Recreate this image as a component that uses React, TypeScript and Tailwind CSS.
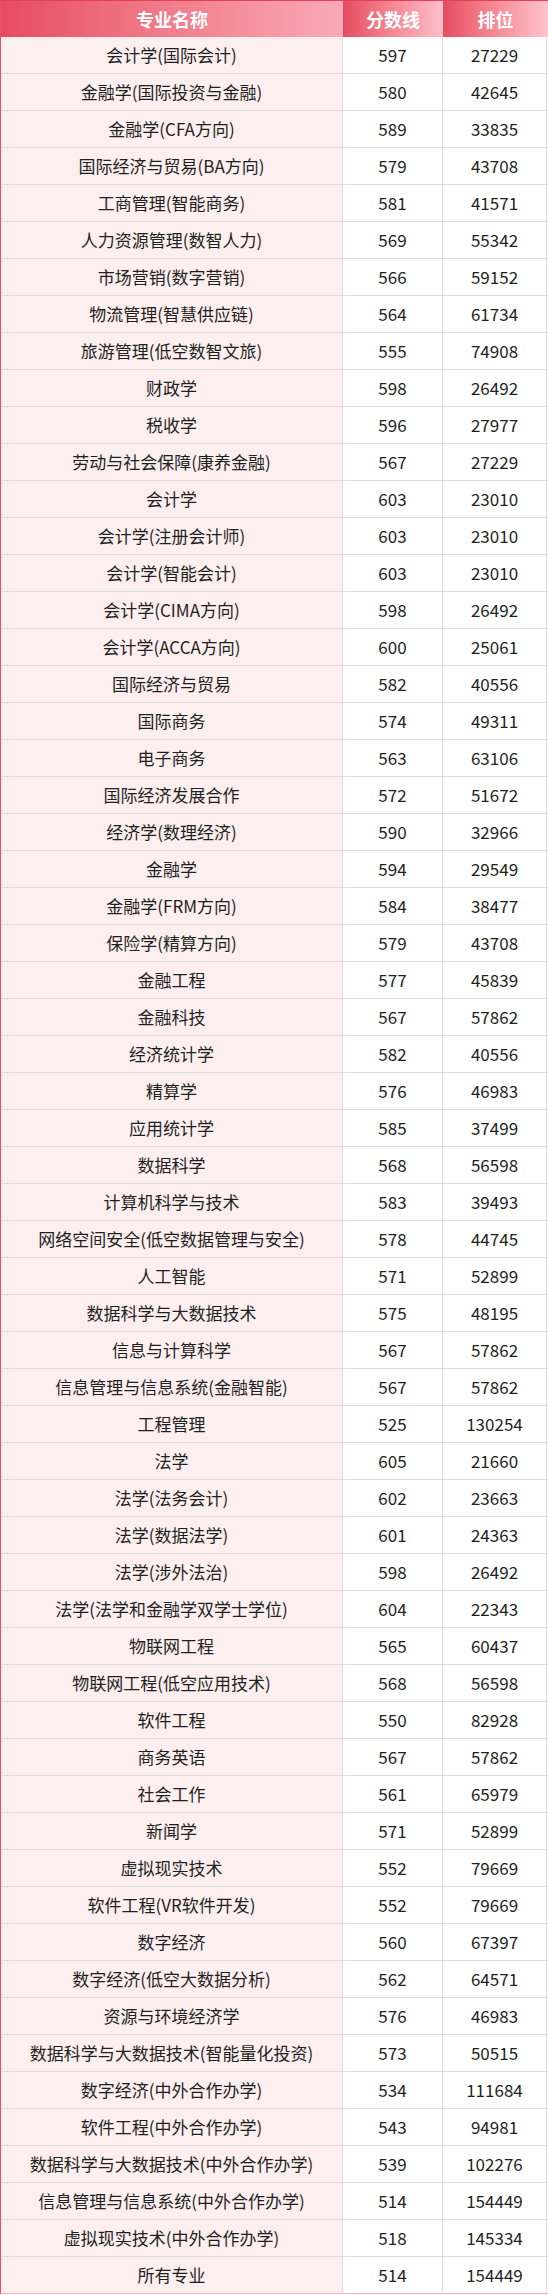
const rows: [string, string, string][] = [
  ["会计学(国际会计)", "597", "27229"],
  ["金融学(国际投资与金融)", "580", "42645"],
  ["金融学(CFA方向)", "589", "33835"],
  ["国际经济与贸易(BA方向)", "579", "43708"],
  ["工商管理(智能商务)", "581", "41571"],
  ["人力资源管理(数智人力)", "569", "55342"],
  ["市场营销(数字营销)", "566", "59152"],
  ["物流管理(智慧供应链)", "564", "61734"],
  ["旅游管理(低空数智文旅)", "555", "74908"],
  ["财政学", "598", "26492"],
  ["税收学", "596", "27977"],
  ["劳动与社会保障(康养金融)", "567", "27229"],
  ["会计学", "603", "23010"],
  ["会计学(注册会计师)", "603", "23010"],
  ["会计学(智能会计)", "603", "23010"],
  ["会计学(CIMA方向)", "598", "26492"],
  ["会计学(ACCA方向)", "600", "25061"],
  ["国际经济与贸易", "582", "40556"],
  ["国际商务", "574", "49311"],
  ["电子商务", "563", "63106"],
  ["国际经济发展合作", "572", "51672"],
  ["经济学(数理经济)", "590", "32966"],
  ["金融学", "594", "29549"],
  ["金融学(FRM方向)", "584", "38477"],
  ["保险学(精算方向)", "579", "43708"],
  ["金融工程", "577", "45839"],
  ["金融科技", "567", "57862"],
  ["经济统计学", "582", "40556"],
  ["精算学", "576", "46983"],
  ["应用统计学", "585", "37499"],
  ["数据科学", "568", "56598"],
  ["计算机科学与技术", "583", "39493"],
  ["网络空间安全(低空数据管理与安全)", "578", "44745"],
  ["人工智能", "571", "52899"],
  ["数据科学与大数据技术", "575", "48195"],
  ["信息与计算科学", "567", "57862"],
  ["信息管理与信息系统(金融智能)", "567", "57862"],
  ["工程管理", "525", "130254"],
  ["法学", "605", "21660"],
  ["法学(法务会计)", "602", "23663"],
  ["法学(数据法学)", "601", "24363"],
  ["法学(涉外法治)", "598", "26492"],
  ["法学(法学和金融学双学士学位)", "604", "22343"],
  ["物联网工程", "565", "60437"],
  ["物联网工程(低空应用技术)", "568", "56598"],
  ["软件工程", "550", "82928"],
  ["商务英语", "567", "57862"],
  ["社会工作", "561", "65979"],
  ["新闻学", "571", "52899"],
  ["虚拟现实技术", "552", "79669"],
  ["软件工程(VR软件开发)", "552", "79669"],
  ["数字经济", "560", "67397"],
  ["数字经济(低空大数据分析)", "562", "64571"],
  ["资源与环境经济学", "576", "46983"],
  ["数据科学与大数据技术(智能量化投资)", "573", "50515"],
  ["数字经济(中外合作办学)", "534", "111684"],
  ["软件工程(中外合作办学)", "543", "94981"],
  ["数据科学与大数据技术(中外合作办学)", "539", "102276"],
  ["信息管理与信息系统(中外合作办学)", "514", "154449"],
  ["虚拟现实技术(中外合作办学)", "518", "145334"],
  ["所有专业", "514", "154449"],
];

export default function App() {
  return (
    <div
      className="w-[548px] bg-white text-[17px] text-[#1f1f1f]"
      style={{ fontFamily: '"Noto Sans CJK SC", "Noto Sans", sans-serif' }}
    >
      <div className="border-l border-[#e8506a]">
        {/* header */}
        <div className="grid h-[37px] grid-cols-[342px_100px_1fr] border-t border-[#e0405a] text-[18px] font-bold text-white">
          <div className="flex items-center justify-center bg-linear-to-r from-[#e54b61] to-[#f9aab7]">专业名称</div>
          <div className="flex items-center justify-center bg-linear-to-r from-[#e54a60] to-[#fdbfca]">分数线</div>
          <div className="flex items-center justify-center bg-linear-to-r from-[#e54a60] to-[#ffc3cd]">排位</div>
        </div>
        {rows.map(([name, score, rank], i) => (
          <div
            key={i}
            className={
              "grid h-[37px] grid-cols-[342px_100px_1fr] border-b " +
              (i === rows.length - 1 ? "border-[#f7b3bf]" : "border-[#dddddd]")
            }
          >
            <div className="flex items-center justify-center border-r border-[#dddddd] bg-[#fdeeef] whitespace-nowrap">
              {name}
            </div>
            <div className="flex items-center justify-center border-r border-[#dddddd]">{score}</div>
            <div className="mr-[1px] flex items-center justify-center border-r border-[#dddddd]">{rank}</div>
          </div>
        ))}
      </div>
    </div>
  );
}
